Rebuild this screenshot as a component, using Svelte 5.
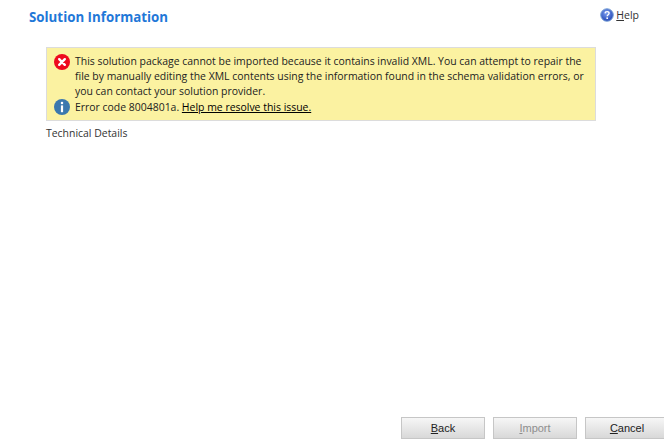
<script>
  const lines = [
    'This solution package cannot be imported because it contains invalid XML. You can attempt to repair the',
    'file by manually editing the XML contents using the information found in the schema validation errors, or',
    'you can contact your solution provider.'
  ];
</script>

<div class="page">
  <header class="head">
    <h1>Solution Information</h1>
    <a class="help" href="#help">
      <svg width="14" height="14" viewBox="0 0 14 14" aria-hidden="true">
        <defs>
          <radialGradient id="hg" cx="45%" cy="35%" r="70%">
            <stop offset="0" stop-color="#7d9ff0" />
            <stop offset="1" stop-color="#1c3fb0" />
          </radialGradient>
        </defs>
        <circle cx="7" cy="7" r="6.3" fill="url(#hg)" stroke="#7fa6d8" stroke-width="1" />
        <path d="M5 5.4c.1-1.2 1-1.8 2.1-1.8 1.2 0 2 .7 2 1.7 0 1.5-1.9 1.5-1.9 3" fill="none" stroke="#fff" stroke-width="1.4" />
        <rect x="6.4" y="9.4" width="1.6" height="1.6" fill="#fff" />
      </svg>
      <span><u>H</u>elp</span>
    </a>
  </header>

  <section class="notice">
    <div class="row">
      <svg class="icon" width="16" height="16" viewBox="0 0 16 16" aria-hidden="true">
        <circle cx="8" cy="8" r="8" fill="#ee0a1e" />
        <path d="M5.2 5.2l5.6 5.6M10.8 5.2l-5.6 5.6" stroke="#fff" stroke-width="2.4" stroke-linecap="round" />
      </svg>
      <p>{#each lines as l}<span class="line">{l}</span>{/each}</p>
    </div>
    <div class="row">
      <svg class="icon info" width="16" height="16" viewBox="0 0 16 16" aria-hidden="true">
        <circle cx="8" cy="8" r="8" fill="#3b78ae" />
        <rect x="6.8" y="2.8" width="2.4" height="2.4" rx="1" fill="#fff" />
        <rect x="6.9" y="6.4" width="2.2" height="6.8" fill="#fff" />
      </svg>
      <p><span class="line">Error code 8004801a. <a href="#resolve">Help me resolve this issue.</a></span></p>
    </div>
  </section>

  <div class="details">Technical Details</div>

  <footer class="foot">
    <button class="btn"><u>B</u>ack</button>
    <button class="btn" disabled><u>I</u>mport</button>
    <button class="btn"><u>C</u>ancel</button>
  </footer>
</div>

<style>
  :global(body) {
    margin: 0;
    background: #fff;
  }
  .page {
    box-sizing: border-box;
    width: 664px;
    height: 442px;
    overflow: hidden;
    display: flex;
    flex-direction: column;
    font-family: "Open Sans", "Noto Sans", sans-serif;
    font-size: 10.44px;
    color: #222;
  }
  .head {
    display: flex;
    justify-content: space-between;
    align-items: flex-start;
    padding: 8px 25px 0 29px;
    height: 47px;
    box-sizing: border-box;
  }
  h1 {
    margin: 1px 0 0;
    font-size: 13.3px;
    line-height: 16px;
    font-weight: 700;
    color: #1f78d8;
  }
  .help {
    display: flex;
    align-items: center;
    gap: 2px;
    color: #333;
    text-decoration: none;
    font-size: 10.5px;
    line-height: 14px;
  }
  .notice {
    box-sizing: border-box;
    width: 550px;
    height: 74px;
    margin-left: 46px;
    padding: 5px 7px 0;
    background: #fbf2a1;
    border: 1px solid #dcdcdc;
  }
  .row {
    display: flex;
    gap: 5px;
    align-items: flex-start;
  }
  .icon {
    flex: none;
    margin-top: 1px;
  }
  .icon.info {
    margin-top: 0;
  }
  p {
    margin: 0;
    padding-top: 1px;
  }
  .line {
    display: block;
    line-height: 15px;
    white-space: nowrap;
    color: #222;
  }
  .line a {
    color: #000;
    text-decoration: underline;
  }
  .details {
    margin: 5px 0 0 46px;
    line-height: 15px;
    color: #333;
  }
  .foot {
    margin-top: auto;
    display: flex;
    gap: 8px;
    padding: 0 0 3px 401px;
  }
  .btn {
    flex: none;
    width: 84px;
    height: 22px;
    padding: 0;
    border: 1px solid #c6c6c6;
    background: linear-gradient(#f6f6f6, #d8d8d8);
    font-family: "Liberation Sans", Arial, sans-serif;
    font-size: 11px;
    font-weight: 400;
    color: #222;
  }
  .btn:disabled {
    color: #8e8e8e;
  }
</style>
